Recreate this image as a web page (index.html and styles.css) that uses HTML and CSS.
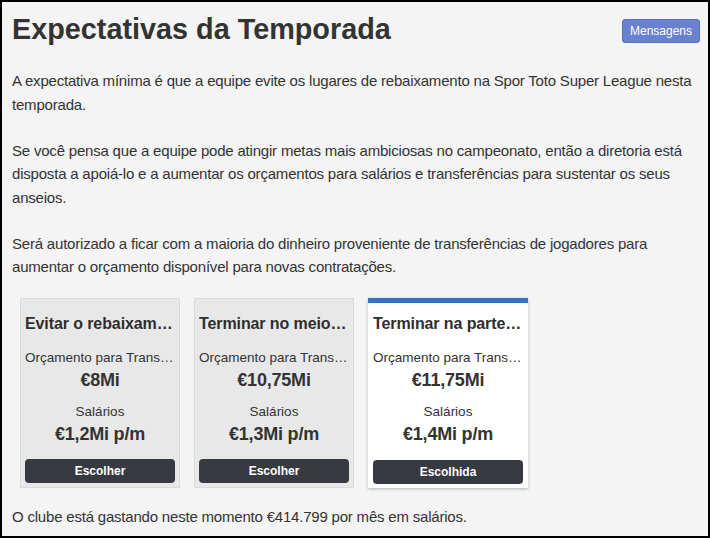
FILE: index.html
```html
<!DOCTYPE html>
<html lang="pt">
<head>
<meta charset="utf-8">
<link rel="stylesheet" href="styles.css">
</head>
<body>
<div class="page">
  <div class="header">
    <h1 class="title">Expectativas da Temporada</h1>
    <button class="msg-btn">Mensagens</button>
  </div>
  <p class="text">A expectativa mínima é que a equipe evite os lugares de rebaixamento na Spor Toto Super League nesta temporada.</p>
  <p class="text">Se você pensa que a equipe pode atingir metas mais ambiciosas no campeonato, então a diretoria está disposta a apoiá-lo e a aumentar os orçamentos para salários e transferências para sustentar os seus anseios.</p>
  <p class="text">Será autorizado a ficar com a maioria do dinheiro proveniente de transferências de jogadores para aumentar o orçamento disponível para novas contratações.</p>
  <div class="cards">
    <div class="card">
      <div class="card-title">Evitar o rebaixamento</div>
      <div class="label">Orçamento para Transferências</div>
      <div class="value">€8Mi</div>
      <div class="label gap">Salários</div>
      <div class="value">€1,2Mi p/m</div>
      <button class="choose">Escolher</button>
    </div>
    <div class="card">
      <div class="card-title">Terminar no meio da tabela</div>
      <div class="label">Orçamento para Transferências</div>
      <div class="value">€10,75Mi</div>
      <div class="label gap">Salários</div>
      <div class="value">€1,3Mi p/m</div>
      <button class="choose">Escolher</button>
    </div>
    <div class="card selected">
      <div class="card-title">Terminar na parte de cima</div>
      <div class="label">Orçamento para Transferências</div>
      <div class="value">€11,75Mi</div>
      <div class="label gap">Salários</div>
      <div class="value">€1,4Mi p/m</div>
      <button class="choose">Escolhida</button>
    </div>
  </div>
  <p class="text footer">O clube está gastando neste momento €414.799 por mês em salários.</p>
</div>
</body>
</html>
```
FILE: styles.css
```css
* { box-sizing: border-box; }
html, body { margin: 0; padding: 0; }
body {
  font-family: "Liberation Sans", Arial, sans-serif;
  color: #333;
  background: #f4f4f4;
}
.page {
  width: 710px;
  height: 538px;
  border: 2px solid #000;
  background: #f4f4f4;
  padding: 8px 8px 0 10px;
  overflow: hidden;
}
.header {
  display: flex;
  justify-content: space-between;
  align-items: flex-start;
}
.title {
  margin: 1px 0 0 0;
  font-size: 28.8px;
  line-height: 36px;
  font-weight: bold;
  color: #333;
}
.msg-btn {
  margin-top: 9px;
  width: 78px;
  height: 24px;
  background: #6a80d1;
  color: #fff;
  border: 1px solid #5a70c4;
  border-radius: 3px;
  font-family: "Liberation Sans", Arial, sans-serif;
  font-size: 12px;
  padding: 0;
}
.text {
  font-size: 15px;
  line-height: 23.5px;
  letter-spacing: -0.2px;
  margin: 22.5px 0 0 0;
}
.text:first-of-type { margin-top: 22px; }
.cards {
  display: flex;
  gap: 14px;
  padding-left: 8px;
  margin-top: 19px;
}
.card {
  width: 160px;
  height: 190px;
  background: #e8e8e8;
  border: 1px solid #dadada;
  padding: 9px 4px 4px 4px;
  display: flex;
  flex-direction: column;
  align-items: stretch;
  text-align: center;
}
.card.selected {
  background: #fff;
  border: none;
  border-top: 5px solid #3572c2;
  box-shadow: 0 1px 3px rgba(0,0,0,0.25);
  padding-top: 5px;
  padding-left: 5px;
  padding-right: 5px;
}
.card-title {
  font-size: 16px;
  font-weight: bold;
  line-height: 32px;
  letter-spacing: -0.1px;
  white-space: nowrap;
  overflow: hidden;
  text-overflow: ellipsis;
  color: #2e2e2e;
}
.label {
  font-size: 13.5px;
  line-height: 20px;
  margin-top: 8px;
  white-space: nowrap;
  overflow: hidden;
  text-overflow: ellipsis;
}
.label.gap { margin-top: 10px; }
.value {
  font-size: 18px;
  font-weight: bold;
  line-height: 24px;
  letter-spacing: -0.2px;
}
.choose {
  margin-top: auto;
  height: 24px;
  background: #383a41;
  color: #fff;
  border: none;
  border-radius: 4px;
  font-family: "Liberation Sans", Arial, sans-serif;
  font-size: 12px;
  font-weight: bold;
  padding: 0;
}
.footer { margin-top: 17px; }
```
